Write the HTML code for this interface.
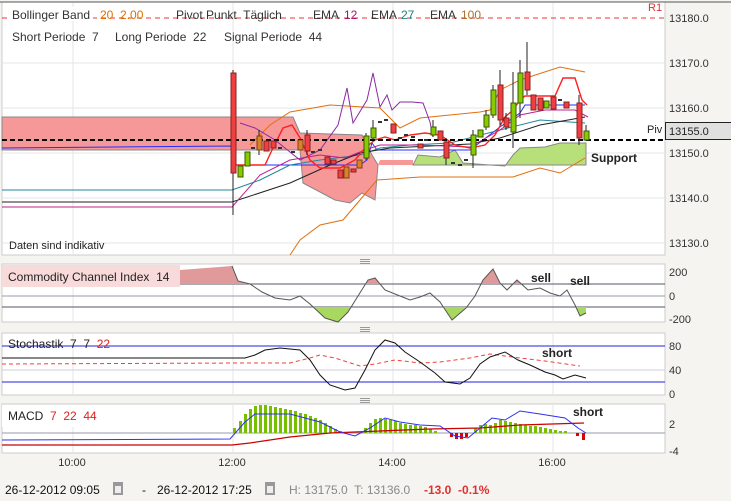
<!DOCTYPE html>
<html><head><meta charset="utf-8"><style>
html,body{margin:0;padding:0;background:#f5f4f0;width:731px;height:501px;overflow:hidden;font-family:"Liberation Sans",sans-serif}
svg{position:absolute;left:0;top:0}
text{font-family:"Liberation Sans",sans-serif;white-space:pre}
</style></head><body>
<svg width="731" height="501" viewBox="0 0 731 501" xmlns="http://www.w3.org/2000/svg" xml:space="preserve">
<defs>
<clipPath id="above"><rect x="0" y="0" width="731" height="284"/></clipPath>
<clipPath id="below"><rect x="0" y="307" width="731" height="40"/></clipPath>
</defs>
<rect x="2" y="2" width="663" height="253" fill="#fff" stroke="#ccc"/>
<line x1="0" y1="2" x2="731" y2="2" stroke="#555"/>
<rect x="2" y="264" width="663" height="58" fill="#fff" stroke="#ccc"/>
<rect x="2" y="333" width="663" height="62" fill="#fff" stroke="#ccc"/>
<rect x="2" y="404" width="663" height="49" fill="#fff" stroke="#ccc"/>
<g stroke="#999"><path d="M360 259.5h10M360 261.5h10M360 263.5h10M360 327.5h10M360 329.5h10M360 331.5h10M360 398.5h10M360 400.5h10M360 402.5h10"/></g>
<g stroke="#e6e6e6">
<path d="M73 3V255M233 3V255M393 3V255M553 3V255M73 264V322M233 264V322M393 264V322M553 264V322M73 333V395M233 333V395M393 333V395M553 333V395M73 404V453M233 404V453M393 404V453M553 404V453"/>
<path d="M2 63H665M2 108H665M2 153H665M2 198H665M2 243H665"/>
</g>
<line x1="2" y1="18" x2="665" y2="18" stroke="#f03030" stroke-dasharray="5,4"/>
<polygon points="2,117 293,117 300,133 362,135 372,155 378,165 375,200 362,193 350,203 335,200 303,183 300,150 2,150" fill="#f79898" stroke="#888"/>
<polygon points="378,165 380,160 413,160 413,165" fill="#f79898"/>
<polygon points="413,165 418,155 440,157 455,150 463,163 490,165 505,166 513,155 520,148 545,147 560,143 586,143 586,165" fill="#b8e07a" stroke="#888"/>
<polyline fill="none" stroke="#e07010" points="250,145 270,125 290,112 330,105 380,108 400,128 420,118 480,112 490,110 500,90 520,80 560,67 585,72"/>
<polyline fill="none" stroke="#e07010" points="290,255 300,240 320,225 343,220 360,200 377,180 420,177 480,177 513,177 540,168 560,173 585,158"/>
<polyline fill="none" stroke="#2030ff" points="2,148 232,146 235,165 360,165 367,160 372,143 377,150 470,150 483,140 500,127 520,113 525,105 585,105"/>
<polyline fill="none" stroke="#208898" points="2,190 232,190 260,180 290,165 320,160 360,155 380,148 410,145 450,143 500,130 540,120 585,123"/>
<polyline fill="none" stroke="#222" points="2,202 232,202 290,183 330,165 360,153 390,148 430,146 470,144 500,138 540,125 585,117"/>
<polyline fill="none" stroke="#c02090" points="2,207 232,207 260,175 290,160 320,155 345,158 365,150 380,145 420,145 470,147 500,130 520,115 545,110 575,110 588,117"/>
<polyline fill="none" stroke="#8a2aa0" points="240,123 255,128 275,140 300,160 320,150 338,125 347,88 353,123 367,100 373,73 380,107 387,95 392,110 400,102 412,102 423,103 430,122 433,137"/>
<polyline fill="none" stroke="#ff2020" stroke-width="1.4" points="232,165 265,165 272,150 283,128 292,125 300,138 310,160 320,168 340,168 355,160 365,148 375,140 385,137 395,140 410,135 425,133 440,135 455,145 470,148 485,145 495,135 505,117 513,110 520,100 525,96 555,96 563,78 575,78 582,100 587,105"/>
<line x1="2" y1="140" x2="665" y2="140" stroke="#000" stroke-width="2" stroke-dasharray="5,3"/>
<g stroke="#222"><path d="M233 70V215M373 120V140M473 130V168M513 72V148M520 60V118M527 42V95M579 95V145M586 125V141M500 70V125M493 85V118M486 110V130M506 113V130M366 133V160M433 120V137M446 138V165M307 130V155M259 130V155"/></g>
<g fill="#ee4040" stroke="#882020">
<rect x="231" y="73" width="5" height="100"/><rect x="264" y="141" width="5" height="10"/><rect x="271" y="141" width="5" height="7"/><rect x="305" y="135" width="5" height="16"/><rect x="325" y="157" width="5" height="7"/><rect x="331" y="160" width="5" height="4"/><rect x="338" y="170" width="5" height="8"/><rect x="351" y="169" width="5" height="3"/><rect x="391" y="124" width="5" height="9"/><rect x="418" y="144" width="5" height="4"/><rect x="438" y="131" width="5" height="9"/><rect x="444" y="142" width="5" height="16"/><rect x="498" y="85" width="5" height="35"/><rect x="504" y="118" width="5" height="9"/><rect x="525" y="72" width="5" height="18"/><rect x="531" y="95" width="5" height="15"/><rect x="538" y="98" width="5" height="12"/><rect x="551" y="97" width="5" height="12"/><rect x="564" y="102" width="5" height="6"/><rect x="577" y="103" width="5" height="35"/>
</g>
<g fill="#d9822b" stroke="#804010">
<rect x="257" y="136" width="5" height="14"/><rect x="298" y="140" width="5" height="10"/><rect x="344" y="167" width="5" height="11"/><rect x="357" y="160" width="5" height="8"/>
</g>
<g fill="#88cc00" stroke="#3a5a00">
<rect x="238" y="166" width="5" height="11"/><rect x="245" y="152" width="5" height="14"/><rect x="364" y="136" width="5" height="22"/><rect x="371" y="128" width="5" height="10"/><rect x="431" y="127" width="5" height="8"/><rect x="471" y="135" width="5" height="20"/><rect x="478" y="130" width="5" height="7"/><rect x="484" y="115" width="5" height="12"/><rect x="491" y="90" width="5" height="25"/><rect x="511" y="103" width="5" height="29"/><rect x="518" y="73" width="5" height="30"/><rect x="544" y="101" width="5" height="7"/><rect x="584" y="131" width="5" height="9"/>
</g>
<g stroke="#333" stroke-width="2"><path d="M251 148h4M278 148h4M291 152h4M311 152h4M318 150h4M378 122h4M384 120h4M398 138h4M404 135h4M411 137h4M424 140h4M451 163h4M458 165h4M464 160h4M558 100h4"/></g>
<g font-size="12" fill="#333">
<rect x="8" y="7" width="85" height="14" fill="#fff"/>
<text x="12" y="19">Bollinger Band</text><text x="100" y="19" fill="#e07000">20  2.00</text>
<text x="176" y="19">Pivot Punkt  Täglich</text>
<text x="313" y="19">EMA</text><text x="344" y="19" fill="#b0106a">12</text>
<text x="371" y="19">EMA</text><text x="401" y="19" fill="#208080">27</text>
<text x="430" y="19">EMA</text><text x="461" y="19" fill="#b07030">100</text>
<text x="12" y="41">Short Periode  7</text><text x="115" y="41">Long Periode  22</text><text x="224" y="41">Signal Periode  44</text>
</g>
<text x="648" y="11" font-size="11" fill="#e03030">R1</text>
<text x="647" y="133" font-size="11" fill="#222">Piv</text>
<text x="591" y="162" font-size="12" font-weight="bold" fill="#222">Support</text>
<text x="9" y="249" font-size="11" fill="#222">Daten sind indikativ</text>
<g font-size="11" fill="#333">
<text x="669" y="22">13180.0</text><text x="669" y="67">13170.0</text><text x="669" y="112">13160.0</text>
<text x="669" y="157">13150.0</text><text x="669" y="202">13140.0</text><text x="669" y="247">13130.0</text>
<text x="669" y="276">200</text><text x="669" y="300">0</text><text x="669" y="323">-200</text>
<text x="669" y="350">80</text><text x="669" y="374">40</text><text x="669" y="398">0</text>
<text x="669" y="428">2</text><text x="669" y="455">-4</text>
</g>
<rect x="665.5" y="122.5" width="66" height="17" fill="#e0e0e0" stroke="#222"/>
<text x="669" y="135" font-size="11" fill="#222">13155.0</text>
<path d="M2 284H665M2 307H665" stroke="#556"/><path d="M2 296H665" stroke="#99a"/>
<g clip-path="url(#above)"><polygon fill="#e09a9a" points="180,284 180,270 232,266 238,281 250,284 262,292 275,298 290,300 300,296 310,304 325,318 338,322 348,312 358,296 368,280 375,278 385,290 400,296 410,300 420,297 430,293 440,302 452,320 466,308 475,296 483,280 493,269 500,283 507,290 517,280 528,290 540,288 550,293 560,296 567,290 575,305 580,316 586,313 586,284"/></g>
<g clip-path="url(#below)"><polygon fill="#a8d860" points="232,307 232,266 238,281 250,284 262,292 275,298 290,300 300,296 310,304 325,318 338,322 348,312 358,296 368,280 375,278 385,290 400,296 410,300 420,297 430,293 440,302 452,320 466,308 475,296 483,280 493,269 500,283 507,290 517,280 528,290 540,288 550,293 560,296 567,290 575,305 580,316 586,313 586,307"/></g>
<polyline fill="none" stroke="#555" points="232,266 238,281 250,284 262,292 275,298 290,300 300,296 310,304 325,318 338,322 348,312 358,296 368,280 375,278 385,290 400,296 410,300 420,297 430,293 440,302 452,320 466,308 475,296 483,280 493,269 500,283 507,290 517,280 528,290 540,288 550,293 560,296 567,290 575,305 580,316 586,313"/>
<rect x="2" y="265" width="178" height="22" fill="#f8dada"/>
<text x="8" y="281" font-size="12" fill="#222">Commodity Channel Index  14</text>
<text x="531" y="282" font-size="12" font-weight="bold" fill="#222">sell</text>
<text x="570" y="285" font-size="12" font-weight="bold" fill="#222">sell</text>
<path d="M2 346H665M2 382H665" stroke="#2020e0"/><path d="M2 370H665" stroke="#ccd"/>
<polyline fill="none" stroke="#f04040" stroke-dasharray="4,3" points="2,364 240,363 290,363 310,358 320,355 335,358 360,366 375,364 395,360 420,363 440,362 470,358 490,354 520,358 545,361 580,366"/>
<polyline fill="none" stroke="#111" points="2,358 245,358 255,355 265,350 280,348 300,350 310,360 320,375 330,385 345,390 355,388 365,370 375,350 385,340 395,343 405,352 420,362 435,373 445,382 460,384 470,378 480,364 490,357 505,352 518,360 530,365 545,372 555,375 563,379 575,375 586,378"/>
<text x="8" y="348" font-size="12" fill="#222">Stochastik  7  7  <tspan fill="#e02020">22</tspan></text>
<text x="542" y="357" font-size="12" font-weight="bold" fill="#222">short</text>
<path d="M2 433H665" stroke="#99a"/>
<g fill="#77c000">
<rect x="233" y="428" width="3" height="5"/><rect x="239" y="421" width="3" height="12"/><rect x="244" y="414" width="3" height="19"/><rect x="249" y="409" width="3" height="24"/><rect x="254" y="406" width="3" height="27"/><rect x="259" y="405" width="3" height="28"/><rect x="264" y="405" width="3" height="28"/><rect x="269" y="406" width="3" height="27"/><rect x="274" y="407" width="3" height="26"/><rect x="279" y="408" width="3" height="25"/><rect x="284" y="409" width="3" height="24"/><rect x="289" y="410" width="3" height="23"/><rect x="294" y="411" width="3" height="22"/><rect x="299" y="413" width="3" height="20"/><rect x="304" y="414" width="3" height="19"/><rect x="309" y="416" width="3" height="17"/><rect x="314" y="418" width="3" height="15"/><rect x="319" y="420" width="3" height="13"/><rect x="324" y="423" width="3" height="10"/><rect x="329" y="426" width="3" height="7"/><rect x="334" y="429" width="3" height="4"/><rect x="339" y="431" width="3" height="2"/><rect x="344" y="432" width="3" height="1"/>
<rect x="364" y="428" width="3" height="5"/><rect x="369" y="423" width="3" height="10"/><rect x="374" y="419" width="3" height="14"/><rect x="379" y="418" width="3" height="15"/><rect x="384" y="419" width="3" height="14"/><rect x="389" y="420" width="3" height="13"/><rect x="394" y="421" width="3" height="12"/><rect x="399" y="423" width="3" height="10"/><rect x="404" y="424" width="3" height="9"/><rect x="409" y="425" width="3" height="8"/><rect x="414" y="425" width="3" height="8"/><rect x="419" y="426" width="3" height="7"/><rect x="424" y="427" width="3" height="6"/><rect x="429" y="429" width="3" height="4"/><rect x="434" y="431" width="3" height="2"/>
<rect x="474" y="428" width="3" height="5"/><rect x="479" y="425" width="3" height="8"/><rect x="484" y="424" width="3" height="9"/><rect x="489" y="425" width="3" height="8"/><rect x="494" y="423" width="3" height="10"/><rect x="499" y="420" width="3" height="13"/><rect x="504" y="421" width="3" height="12"/><rect x="509" y="422" width="3" height="11"/><rect x="514" y="423" width="3" height="10"/><rect x="519" y="424" width="3" height="9"/><rect x="524" y="425" width="3" height="8"/><rect x="529" y="426" width="3" height="7"/><rect x="534" y="426" width="3" height="7"/><rect x="539" y="427" width="3" height="6"/><rect x="544" y="428" width="3" height="5"/><rect x="549" y="429" width="3" height="4"/><rect x="554" y="430" width="3" height="3"/><rect x="559" y="431" width="3" height="2"/><rect x="564" y="431" width="3" height="2"/>
</g>
<g fill="#e00000"><rect x="450" y="433" width="3" height="4"/><rect x="455" y="433" width="3" height="6"/><rect x="460" y="433" width="3" height="6"/><rect x="465" y="433" width="3" height="4"/><rect x="576" y="433" width="3" height="3"/><rect x="582" y="433" width="3" height="7"/></g>
<polyline fill="none" stroke="#cc0000" stroke-width="1.3" points="2,445 232,445 250,443 290,437 330,433 380,431 430,429 480,428 520,425 584,423"/>
<polyline fill="none" stroke="#3030f0" points="2,440 230,439 245,422 255,414 290,414 320,422 340,432 355,436 370,428 385,418 400,422 420,425 440,426 455,436 468,438 480,428 492,418 505,420 520,411 540,414 565,418 578,428 586,433"/>
<rect x="2" y="405" width="98" height="22" fill="#fff"/>
<text x="8" y="420" font-size="12" fill="#222">MACD  <tspan fill="#e02020">7  22  44</tspan></text>
<text x="573" y="416" font-size="12" font-weight="bold" fill="#222">short</text>
<g font-size="11" fill="#333" text-anchor="middle">
<text x="72" y="466">10:00</text><text x="232" y="466">12:00</text><text x="392" y="466">14:00</text><text x="552" y="466">16:00</text>
</g>
<g font-size="12">
<text x="5" y="494" fill="#111">26-12-2012 09:05</text>
<rect x="113" y="482" width="10" height="13" fill="#999"/><rect x="115" y="486" width="6" height="7" fill="#eee"/>
<text x="142" y="494" fill="#111">-</text>
<text x="157" y="494" fill="#111">26-12-2012 17:25</text>
<rect x="265" y="482" width="10" height="13" fill="#999"/><rect x="267" y="486" width="6" height="7" fill="#eee"/>
<text x="289" y="494" fill="#888">H: 13175.0  T: 13136.0</text>
<text x="424" y="494" fill="#e03030" font-weight="bold">-13.0  -0.1%</text>
</g>
</svg>
</body></html>
